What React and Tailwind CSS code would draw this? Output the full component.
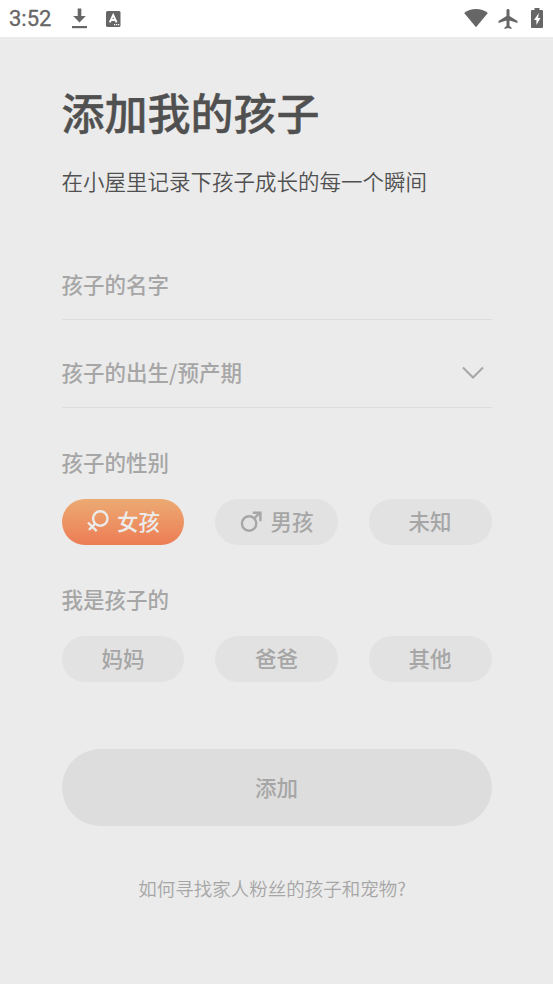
import React, { useState } from "react";

const CJK = "font-['Noto_Sans_CJK_SC',sans-serif]";

function StatusBar() {
  return (
    <div className="flex h-[37px] items-center justify-between bg-white pl-[9px] pr-[10px] text-[#666666]">
      <div className="flex items-center">
        <span className="w-[62px] pt-px font-['Roboto',sans-serif] text-[22px] leading-[36px] [-webkit-text-stroke:0.3px_#666666]">3:52</span>
        <svg className="h-[21px] w-[17px]" viewBox="0 0 17 21" fill="currentColor">
          <path d="M6.700 .5h3.600v7.500h4.500L8.500 14.500 2.200 8h4.500z" />
          <path d="M1 18h15v2.200H1z" />
        </svg>
        <svg className="ml-[18px] h-4 w-[15px]" viewBox="0 0 15 16" fill="none">
          <rect width="14.5" height="16" rx="1.5" fill="currentColor" />
          <path d="M3.800 11.300 7.200 4l3.400 7.300M5.100 9h4.200" stroke="#fff" strokeWidth="1.9" />
          <path d="M8 13h1.200v1.200H8zM10 13h1.200v1.200H10zM12 13h1.200v1.200H12z" fill="#fff" />
        </svg>
      </div>
      <div className="flex items-center">
        <svg className="h-[19px] w-6" viewBox="0 0 24 19" fill="currentColor">
          <path d="M12 18.300.200 4.100C3.300 1.500 7.500 0 12 0s8.700 1.500 11.800 4.100z" />
        </svg>
        <svg className="ml-[10px] h-5 w-5" viewBox="2 2 19 20" fill="currentColor">
          <path d="M21 16v-2l-8-5V3.500c0-.83-.67-1.500-1.500-1.500S10 2.670 10 3.500V9l-8 5v2l8-2.500V19l-2 1.500V22l3.500-1 3.500 1v-1.500L13 19v-5.500z" />
        </svg>
        <svg className="mb-px ml-[13px] h-5 w-3" viewBox="0 0 12 20" fill="none">
          <path d="M3.500 0h5v2H11a1 1 0 0 1 1 1v16a1 1 0 0 1-1 1H1a1 1 0 0 1-1-1V3a1 1 0 0 1 1-1h2.500z" fill="currentColor" />
          <path d="M7.800 5 3 12h2.400v5L9.500 10H7.100z" fill="#fff" />
        </svg>
      </div>
    </div>
  );
}

function FemaleIcon() {
  return (
    <svg className="h-6 w-[23px]" viewBox="0 0 23 24" fill="none" stroke="currentColor" strokeWidth="2.400">
      <circle cx="14.300" cy="8.500" r="7.200" />
      <path d="M9.200 13.600 3 19.800M2 12.500l8.700 8.700" />
    </svg>
  );
}

function MaleIcon() {
  return (
    <svg className="h-[22px] w-[23px]" viewBox="0 0 23 22" fill="none" stroke="currentColor" strokeWidth="2.400">
      <circle cx="10.100" cy="12.500" r="7.200" />
      <path d="M15.200 7.400l6-6M13.800 1.700h7.600v8.500" />
    </svg>
  );
}

function Pill({ label, icon, active, onClick }) {
  return (
    <button
      onClick={onClick}
      className={`flex h-[46px] items-center justify-center gap-2 rounded-full text-[21.5px] font-medium ${
        active ? "bg-linear-to-b from-[#ecaa72] to-[#ec7c54] text-[#ebebeb]" : "bg-[#e2e2e2] text-[#a6a6a6]"
      }`}
    >
      {icon}
      <span className="pb-[2px]">{label}</span>
    </button>
  );
}

const genders = [
  { label: "女孩", icon: <FemaleIcon /> },
  { label: "男孩", icon: <MaleIcon /> },
  { label: "未知" },
];
const relations = [{ label: "妈妈" }, { label: "爸爸" }, { label: "其他" }];

export default function App() {
  const [gender, setGender] = useState("女孩");
  const [relation, setRelation] = useState("");

  return (
    <div className={`h-[984px] w-full overflow-hidden bg-[#ebebeb] ${CJK}`}>
      <StatusBar />
      <main className="flex flex-col px-[61.5px] pt-[42px] text-[21.5px] leading-8 text-[#a6a6a6]">
        <h1 className="text-[43px] font-medium leading-[64px] text-[#505050] [-webkit-text-stroke:0.4px_#505050]">添加我的孩子</h1>
        <p className="mt-[22px] whitespace-nowrap font-[350] text-[#505050]">在小屋里记录下孩子成长的每一个瞬间</p>

        <div className="mt-[57px] h-[66px] border-b border-[#dcdcdc] pt-[14px] font-medium">孩子的名字</div>
        <div className="flex h-[88px] items-start justify-between border-b border-[#dcdcdc] pr-2 pt-[36px] font-medium">
          <span>孩子的出生/预产期</span>
          <svg className="mt-[9.5px] h-[14px] w-[22px]" viewBox="0 0 22 14" fill="none" stroke="#a6a6a6" strokeWidth="2">
            <path d="M1 1.500 11 11.500 21 1.500" />
          </svg>
        </div>

        <h2 className="mt-[38px] font-medium">孩子的性别</h2>
        <div className="mt-[21px] grid grid-cols-3 gap-x-[30.7px]">
          {genders.map((g) => (
            <Pill key={g.label} {...g} active={gender === g.label} onClick={() => setGender(g.label)} />
          ))}
        </div>

        <h2 className="mt-[38px] font-medium">我是孩子的</h2>
        <div className="mt-[20.5px] grid grid-cols-3 gap-x-[30.7px]">
          {relations.map((r) => (
            <Pill key={r.label} {...r} active={relation === r.label} onClick={() => setRelation(r.label)} />
          ))}
        </div>

        <button className="mt-[67.5px] h-[77px] rounded-full bg-[#dddddd] pb-[2px] font-medium">添加</button>
        <a className="mt-[46px] whitespace-nowrap pr-[9px] text-center text-[18.500px] font-[350]">如何寻找家人粉丝的孩子和宠物?</a>
      </main>
    </div>
  );
}
